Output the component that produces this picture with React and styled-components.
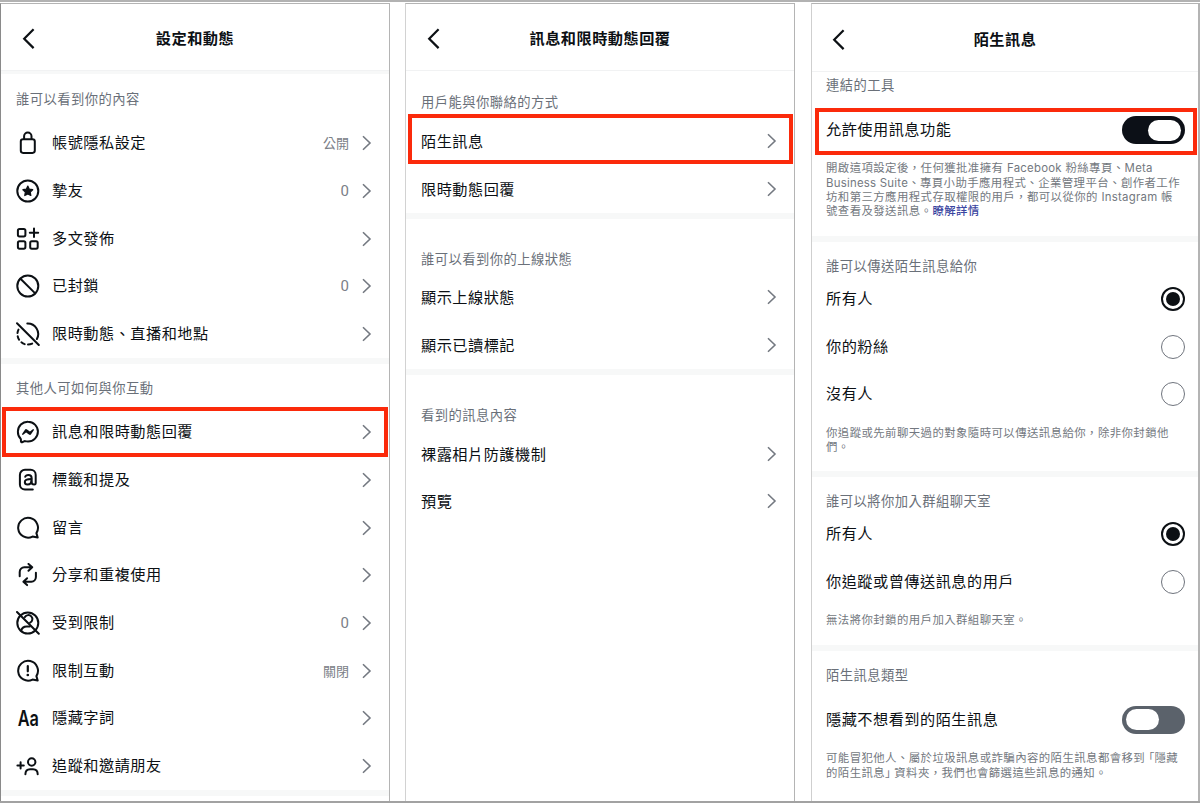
import React, { useState } from 'react';
import styled, { createGlobalStyle } from 'styled-components';

const GlobalStyle = createGlobalStyle`
  * {
    box-sizing: border-box;
  }
  body {
    margin: 0;
    background: #ffffff;
    color: #0c1014;
    font-family: Inter, 'Noto Sans CJK TC', sans-serif;
    overflow: hidden;
  }
`;

const Page = styled.div`
  display: flex;
  width: 1200px;
  height: 803px;
  padding-top: 1px;
  border-top: 2px solid #b2b2b2;
  border-bottom: 2px solid #a2a2a2;
`;

const Panel = styled.div`
  width: ${props => props.width || 390}px;
  margin-left: ${props => props.gap || 0}px;
  border: 1px solid #b4b4b4;
  border-left-color: ${props => props.leftLine || '#b4b4b4'};
  border-right-width: ${props => props.rightWidth || 1}px;
  border-bottom: 0;
  overflow: hidden;
`;

const Header = styled.div`
  position: relative;
  display: flex;
  align-items: center;
  justify-content: center;
  height: ${props => props.height || 67}px;
  padding-top: ${props => props.push || 3}px;
  border-bottom: 1px solid #f1f2f3;
`;

const Title = styled.h1`
  margin: 0;
  font-size: 15.2px;
  line-height: 20px;
  font-weight: 700;
  letter-spacing: 0.48px;
`;

const BackButton = styled.button`
  position: absolute;
  left: ${props => props.left || 20}px;
  display: flex;
  padding: 0;
  border: 0;
  background: none;
`;

const Divider = styled.div`
  height: ${props => props.height || 6}px;
  background: #f7f8f8;
`;

const SectionLabel = styled.div`
  padding: ${props => props.top}px 15px ${props => props.bottom}px ${props => props.left || 15}px;
  font-size: 13.3px;
  line-height: 18px;
  letter-spacing: 0.46px;
  color: #6a7079;
`;

const RowBox = styled.div`
  position: relative;
  display: flex;
  align-items: center;
  height: 47.7px;
  padding: 0 ${props => props.right}px 0 ${props => props.left || 15}px;
`;

const Highlight = styled.div`
  position: absolute;
  top: ${props => props.top}px;
  right: ${props => props.right}px;
  bottom: ${props => props.bottom}px;
  left: ${props => props.left}px;
  border: 4px solid #fb2a0b;
  pointer-events: none;
`;

const IconBox = styled.div`
  display: flex;
  align-items: center;
  justify-content: center;
  width: 24px;
  height: 24px;
  margin-right: 12px;
`;

const Letters = styled.span`
  font-size: 22px;
  line-height: 24px;
  font-weight: 600;
  transform: scaleX(0.74);
`;

const Label = styled.div`
  flex: 1;
  padding-top: ${props => props.drop || 0}px;
  font-size: 15.2px;
  line-height: 20px;
  letter-spacing: 0.48px;
  white-space: nowrap;
`;

const Value = styled.div`
  margin-right: 13px;
  font-family: ${props => props.digit ? 'Roboto' : "'Noto Sans CJK TC'"}, sans-serif;
  font-size: ${props => props.digit ? 15 : 13}px;
  line-height: 20px;
  color: #7b8087;
`;

const Note = styled.p`
  margin: 0;
  padding: ${props => props.top}px 0 ${props => props.bottom}px 14px;
  font-size: 11.4px;
  line-height: 14.3px;
  letter-spacing: 0.43px;
  white-space: nowrap;
  color: #737880;
`;

const Latin = styled.span`
  letter-spacing: 0.25px;
`;

const Link = styled.a`
  color: #3a44a0;
  font-weight: 500;
`;

const OpenQuote = styled.span`
  margin-left: 3.2px;
  font-feature-settings: 'palt';
`;

const CloseQuote = styled.span`
  margin-right: 3px;
  font-feature-settings: 'palt';
`;

const Track = styled.button`
  display: flex;
  align-items: center;
  justify-content: ${props => props.on ? 'flex-end' : 'flex-start'};
  width: 63px;
  height: 28px;
  padding: 0 4px;
  border: 0;
  border-radius: 14px;
  background: ${props => props.on ? '#0c1017' : '#5b626b'};
`;

const Knob = styled.span`
  width: 33px;
  height: 21px;
  border-radius: 11px;
  background: #ffffff;
`;

const RadioRing = styled.button`
  display: flex;
  align-items: center;
  justify-content: center;
  width: 24px;
  height: 24px;
  padding: 0;
  border: ${props => props.checked ? '2px solid #0c1014' : '1.5px solid #6f747d'};
  border-radius: 50%;
  background: #ffffff;
`;

const RadioDot = styled.span`
  width: 14px;
  height: 14px;
  border-radius: 50%;
  background: #0c1014;
`;

const Svg = ({ children }) => (
  <svg
    width="24"
    height="24"
    viewBox="0 0 24 24"
    fill="none"
    stroke="#0c1014"
    strokeWidth="2"
    strokeLinecap="round"
    strokeLinejoin="round"
  >
    {children}
  </svg>
);

const bubble = 'M20.4 17.100a9.900 9.900 0 1 0-3.900 3.500l5.200 1z';

const icons = {
  lock: (
    <Svg>
      <rect x="4.800" y="8.200" width="14" height="13.700" rx="2.300" />
      <path d="M8.100 8V5.300a3.700 3.700 0 0 1 7.400 0V8" />
    </Svg>
  ),
  star: (
    <Svg>
      <circle cx="11.800" cy="12" r="10.500" />
      <path
        d="M11.800 7.100l1.500 3.100 3.400.5-2.450 2.400.6 3.400-3.050-1.600-3.050 1.600.6-3.400-2.450-2.400 3.400-.5z"
        fill="#0c1014"
        strokeWidth="1.2"
      />
    </Svg>
  ),
  grid: (
    <Svg>
      <rect x="1.900" y="1.900" width="7.500" height="7.500" rx="1.600" />
      <rect x="1.900" y="14.200" width="7.500" height="7.500" rx="1.600" />
      <rect x="14.200" y="14.200" width="7.500" height="7.500" rx="1.600" />
      <path d="M18 1.500v8.400M13.800 5.700h8.400" />
    </Svg>
  ),
  blocked: (
    <Svg>
      <circle cx="11.800" cy="12" r="10.500" />
      <path d="M4.500 4.700l14.700 14.700" />
    </Svg>
  ),
  storyOff: (
    <Svg>
      <path d="M1 1.200l21.800 21.800" />
      <path d="M11.300 1.500a10.500 10.500 0 0 1 9.600 15.500" />
      <path d="M2.500 7.600a10.300 10.300 0 0 0-1 3.400M1.700 14.200a10.300 10.300 0 0 0 1.400 3.500M5.400 20.300a10.300 10.300 0 0 0 3.300 1.800M12 22.500a10.300 10.300 0 0 0 4.200-.9" />
    </Svg>
  ),
  messenger: (
    <Svg>
      <path d="M12.003 1.700a9.900 9.900 0 1 1 0 19.800 11 11 0 0 1-2.900-.4.800.8 0 0 0-.53.040l-2.500 1.100a.8.8 0 0 1-1.120-.71l-.05-2.200a.8.8 0 0 0-.27-.57A9.700 9.700 0 0 1 1.900 11.600a9.850 9.850 0 0 1 10.100-9.900z" />
      <path
        d="M17.790 10.132a.659.659 0 0 0-.962-.873l-2.556 2.050a.63.63 0 0 1-.758.002L11.060 9.470a1.576 1.576 0 0 0-2.277.420l-2.567 3.980a.659.659 0 0 0 .961.875l2.556-2.049a.63.63 0 0 1 .759-.002l2.452 1.840a1.576 1.576 0 0 0 2.278-.420z"
        fill="#0c1014"
        stroke="none"
      />
    </Svg>
  ),
  mention: (
    <Svg>
      <path d="M16.800 21.600H9a5.100 5.100 0 0 1-5.100-5.100V6.900A5.100 5.100 0 0 1 9 1.800h5.600a5.100 5.100 0 0 1 5.100 5.100v8.300c0 .9-.6 1.400-1.500 1.400-1.600 0-2.600-.9-2.600-2.500V9.700c0-1.800-1.200-2.800-3.200-2.800-1.600 0-2.800.7-3.200 1.900" />
      <path d="M15.400 11.100c-3.700 0-6.600.2-6.600 2.900 0 1.600 1.200 2.500 2.800 2.500 2.200 0 3.800-1.300 3.800-3.400" />
    </Svg>
  ),
  comment: (
    <Svg>
      <path d={bubble} />
    </Svg>
  ),
  reuse: (
    <Svg>
      <path d="M3.700 13.200V8.900a4.600 4.600 0 0 1 4.600-4.600h7.800M12.500.9l3.700 3.400-3.700 3.500" />
      <path d="M19.900 9.800v4.300a4.600 4.600 0 0 1-4.600 4.600H7.500M11.100 15.200l-3.700 3.500 3.700 3.400" />
    </Svg>
  ),
  restricted: (
    <Svg>
      <circle cx="11.800" cy="12" r="10.500" />
      <path d="M1 1l21.800 21.800" />
      <path d="M8.900 6.100a4 4 0 1 1 5.200 5.600M5.200 19.800c.6-2.700 2.600-4.300 5.500-4.300h3.100" />
    </Svg>
  ),
  limit: (
    <Svg>
      <path d={bubble} />
      <path d="M11.800 7v5.300" strokeWidth="2.200" />
      <circle cx="11.800" cy="16" r="1.350" fill="#0c1014" stroke="none" />
    </Svg>
  ),
  letters: <Letters>Aa</Letters>,
  addFriend: (
    <Svg>
      <path d="M4.600 8.200v6.400M1.400 11.400h6.400" />
      <circle cx="15.700" cy="8" r="3.700" />
      <path d="M9.400 20.300c0-3.200 1.900-5 4.700-5h2.900c2.800 0 4.700 1.800 4.700 5" />
    </Svg>
  )
};

const Chevron = () => (
  <svg width="10" height="16" viewBox="0 0 10 16" fill="none" stroke="#747981" strokeWidth="1.6">
    <path d="M1 1.200L8 8l-7 6.800" />
  </svg>
);

const PanelHeader = ({ title, height, push, backLeft }) => (
  <Header height={height} push={push}>
    <BackButton aria-label="返回" left={backLeft}>
      <svg width="16" height="22" viewBox="0 0 16 22" fill="none" stroke="#0c1014" strokeWidth="2.200">
        <path d="M12.600 1.300L3.200 10.700l9.400 9.400" />
      </svg>
    </BackButton>
    <Title>{title}</Title>
  </Header>
);

const LinkRow = ({ icon, label, value, right = 17, drop, highlight }) => (
  <RowBox right={right}>
    {icon && <IconBox>{icons[icon]}</IconBox>}
    <Label drop={drop}>{label}</Label>
    {value && <Value digit={value === '0'}>{value}</Value>}
    <Chevron />
    {highlight && <Highlight {...highlight} />}
  </RowBox>
);

const SwitchRow = ({ label, initial, highlight }) => {
  const [ on, setOn ] = useState(initial);
  return (
    <RowBox right={13} left={14}>
      <Label>{label}</Label>
      <Track on={on} onClick={() => setOn(!on)}>
        <Knob />
      </Track>
      {highlight && <Highlight {...highlight} />}
    </RowBox>
  );
};

const RadioRows = ({ options }) => {
  const [ selected, setSelected ] = useState(0);
  return options.map((option, i) => (
    <RowBox key={option} right={13} left={14}>
      <Label>{option}</Label>
      <RadioRing checked={selected === i} onClick={() => setSelected(i)}>
        {selected === i && <RadioDot />}
      </RadioRing>
    </RowBox>
  ));
};

const visibilityRows = [
  { icon: 'lock', label: '帳號隱私設定', value: '公開' },
  { icon: 'star', label: '摯友', value: '0' },
  { icon: 'grid', label: '多文發佈' },
  { icon: 'blocked', label: '已封鎖', value: '0' },
  { icon: 'storyOff', label: '限時動態、直播和地點' }
];

const interactionRows = [
  {
    icon: 'messenger',
    label: '訊息和限時動態回覆',
    highlight: { top: -1.5, right: 1, bottom: -1, left: 1 }
  },
  { icon: 'mention', label: '標籤和提及' },
  { icon: 'comment', label: '留言' },
  { icon: 'reuse', label: '分享和重複使用' },
  { icon: 'restricted', label: '受到限制', value: '0' },
  { icon: 'limit', label: '限制互動', value: '關閉' },
  { icon: 'letters', label: '隱藏字詞' },
  { icon: 'addFriend', label: '追蹤和邀請朋友' }
];

function App() {
  return <>
    <GlobalStyle />
    <Page lang="zh-Hant">
      <Panel leftLine="#8a8a8a">
        <PanelHeader title="設定和動態" />
        <Divider height={3} />
        <SectionLabel top={16} bottom={11.5}>誰可以看到你的內容</SectionLabel>
        {visibilityRows.map(row => <LinkRow key={row.label} {...row} />)}
        <Divider />
        <SectionLabel top={15} bottom={11.4}>其他人可如何與你互動</SectionLabel>
        {interactionRows.map(row => <LinkRow key={row.label} {...row} />)}
        <Divider />
      </Panel>

      <Panel gap={15} leftLine="#d2d2d2">
        <PanelHeader title="訊息和限時動態回覆" push={4} />
        <SectionLabel top={22} bottom={6.5}>用戶能與你聯絡的方式</SectionLabel>
        <LinkRow
          label="陌生訊息"
          drop={2}
          highlight={{ top: -4, right: 1, bottom: 1.5, left: 2 }}
        />
        <LinkRow label="限時動態回覆" drop={2} />
        <Divider />
        <SectionLabel top={31} bottom={5.6}>誰可以看到你的上線狀態</SectionLabel>
        <LinkRow label="顯示上線狀態" drop={2} />
        <LinkRow label="顯示已讀標記" drop={2} />
        <Divider />
        <SectionLabel top={31.5} bottom={5.5}>看到的訊息內容</SectionLabel>
        <LinkRow label="裸露相片防護機制" drop={2} />
        <LinkRow label="預覽" drop={2} />
      </Panel>

      <Panel gap={16} width={389} rightWidth={2} leftLine="#cfcfcf">
        <PanelHeader title="陌生訊息" height={68} push={4} backLeft={19} />
        <SectionLabel left={14} top={4.2} bottom={12}>連結的工具</SectionLabel>
        <SwitchRow
          label="允許使用訊息功能"
          initial={true}
          highlight={{ top: 1.5, right: 1, bottom: -1, left: 3 }}
        />
        <Note top={7.5} bottom={17}>
          開啟這項設定後，任何獲批准擁有 <Latin>Facebook</Latin> 粉絲專頁、<Latin>Meta</Latin><br />
          <Latin>Business Suite</Latin>、專頁小助手應用程式、企業管理平台、創作者工作<br />
          坊和第三方應用程式存取權限的用戶，都可以從你的 <Latin>Instagram</Latin> 帳<br />
          號查看及發送訊息。<Link>瞭解詳情</Link>
        </Note>
        <Divider />
        <SectionLabel left={14} top={15.5} bottom={0}>誰可以傳送陌生訊息給你</SectionLabel>
        <RadioRows options={[ '所有人', '你的粉絲', '沒有人' ]} />
        <Note top={7.6} bottom={17}>
          你追蹤或先前聊天過的對象隨時可以傳送訊息給你，除非你封鎖他<br />
          們。
        </Note>
        <Divider />
        <SectionLabel left={14} top={15} bottom={0.3}>誰可以將你加入群組聊天室</SectionLabel>
        <RadioRows options={[ '所有人', '你追蹤或曾傳送訊息的用戶' ]} />
        <Note top={7.2} bottom={17.9}>無法將你封鎖的用戶加入群組聊天室。</Note>
        <Divider />
        <SectionLabel left={14} top={15} bottom={11.7}>陌生訊息類型</SectionLabel>
        <SwitchRow label="隱藏不想看到的陌生訊息" initial={false} />
        <Note top={7.5} bottom={10}>
          可能冒犯他人、屬於垃圾訊息或詐騙內容的陌生訊息都會移到<OpenQuote>「</OpenQuote>隱藏<br />
          的陌生訊息<CloseQuote>」</CloseQuote>資料夾，我們也會篩選這些訊息的通知。
        </Note>
      </Panel>
    </Page>
  </>
}

export default App;
